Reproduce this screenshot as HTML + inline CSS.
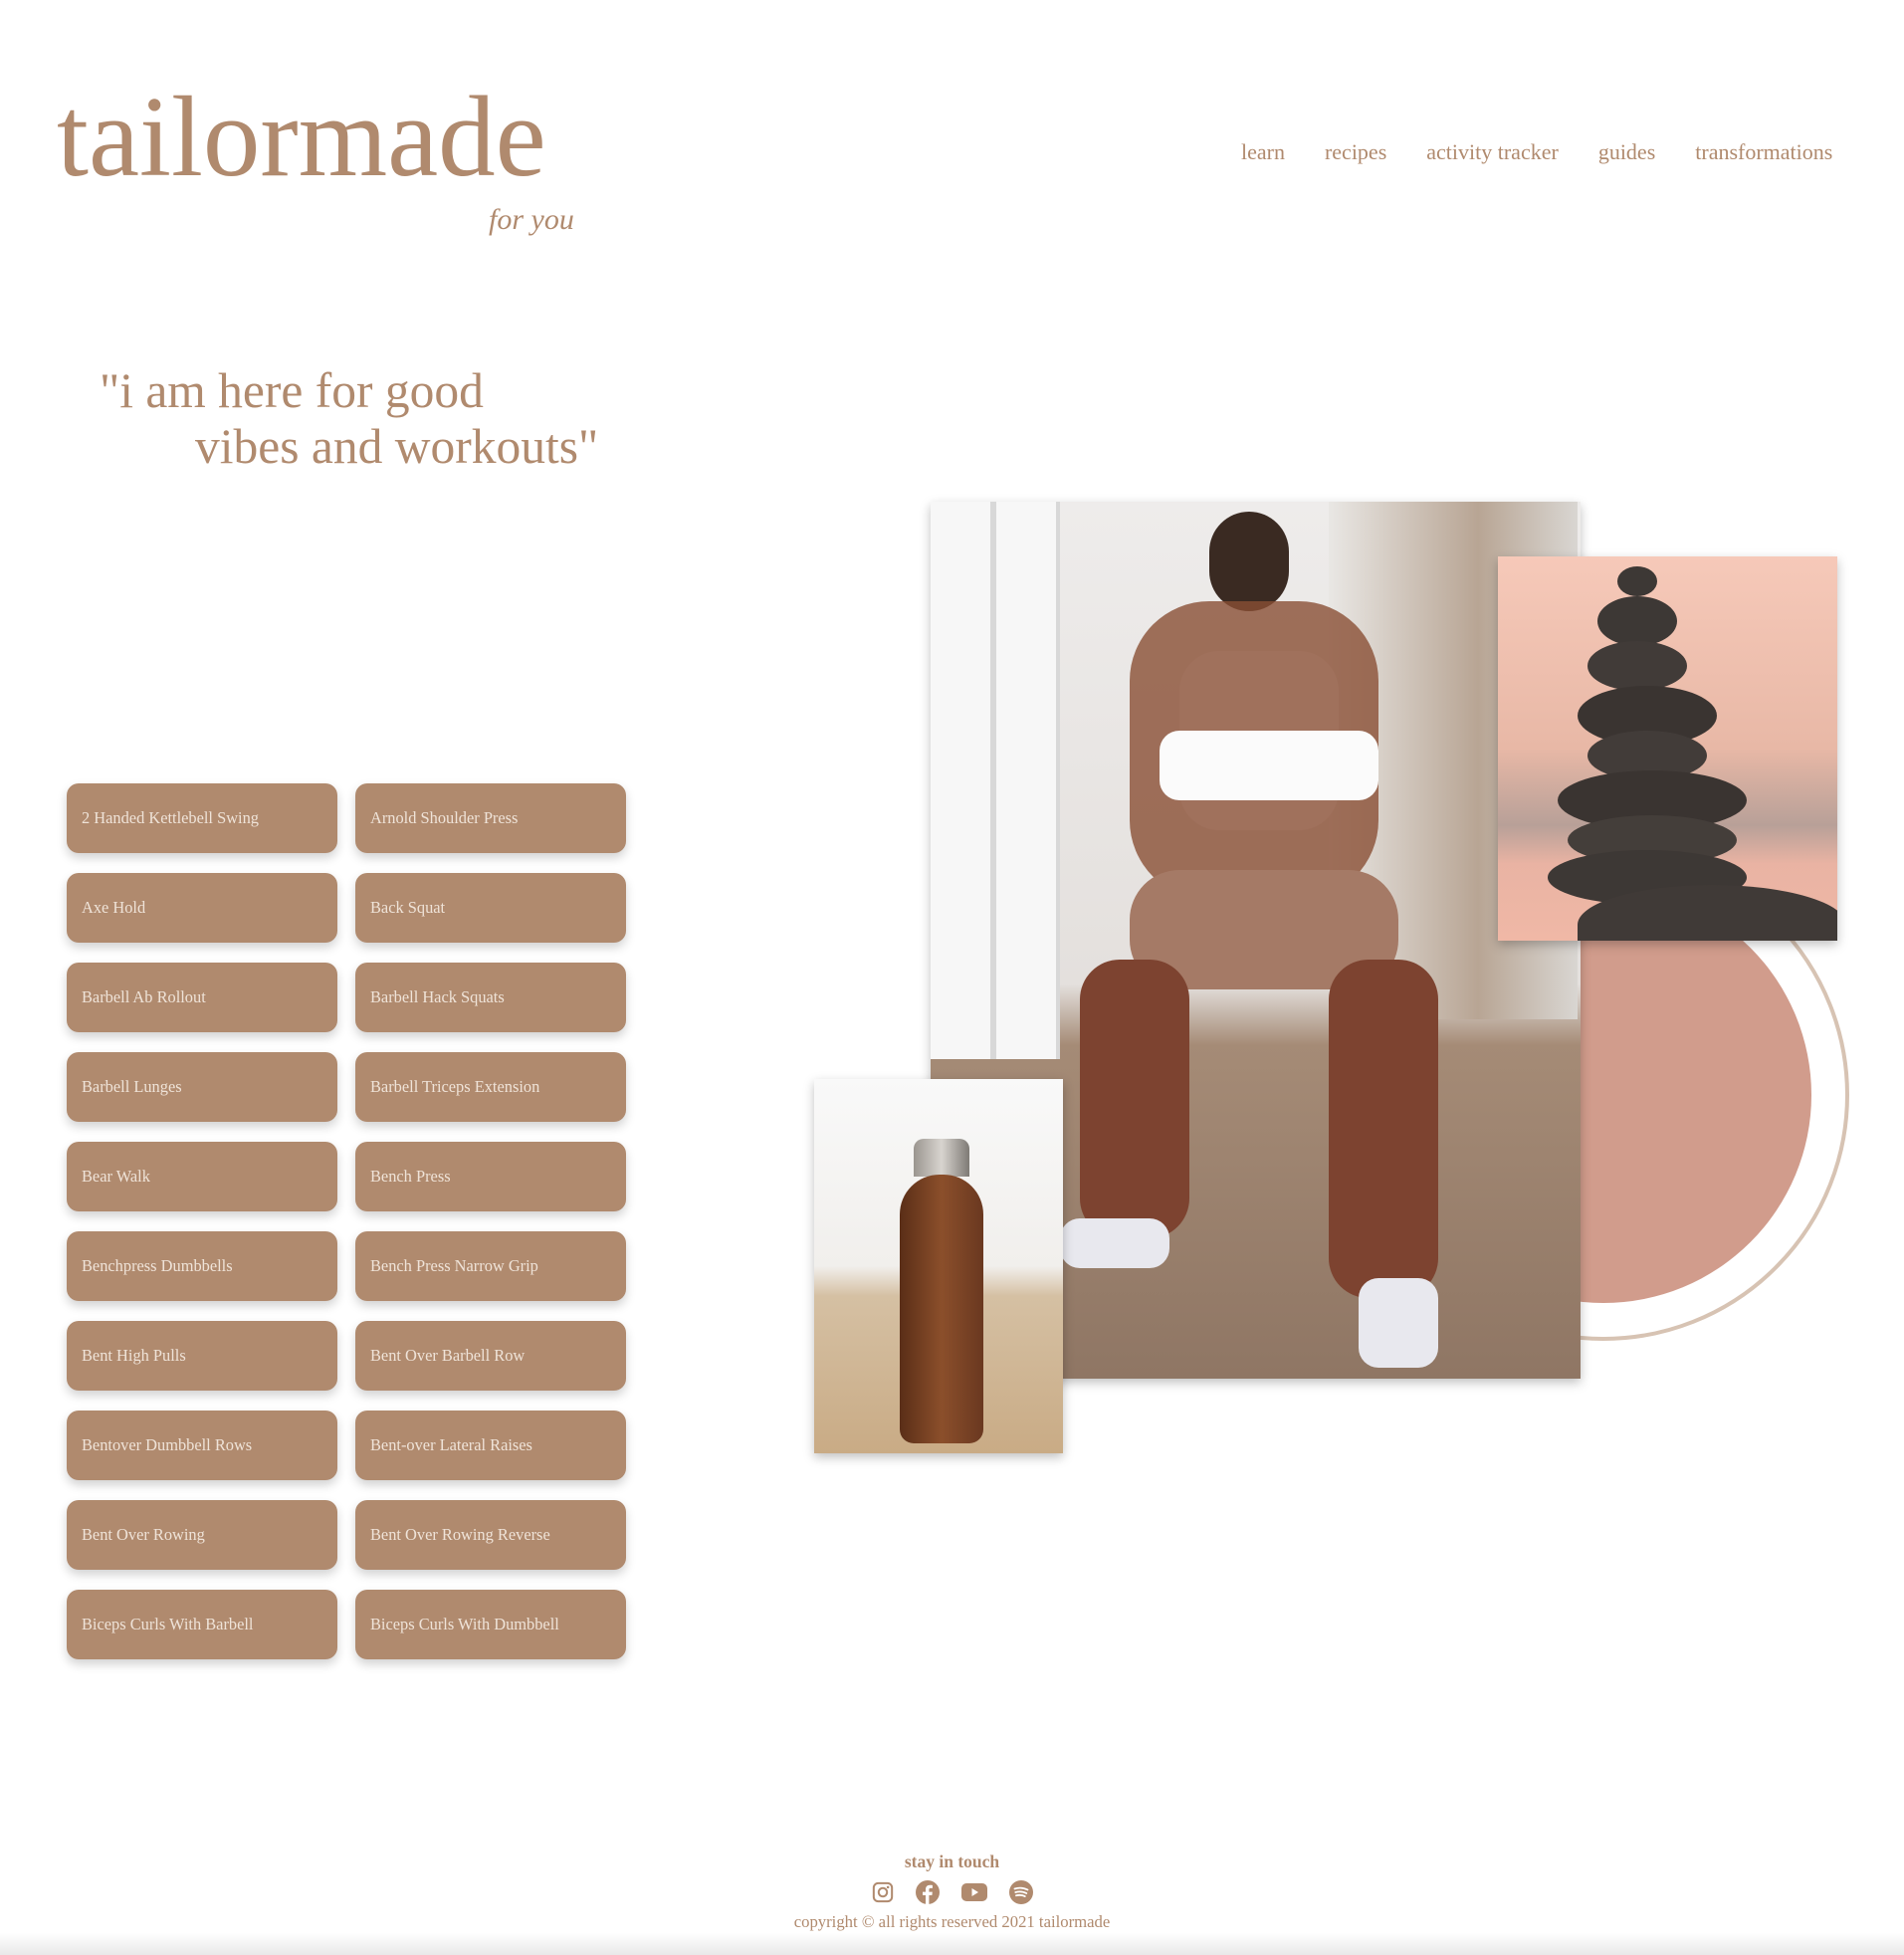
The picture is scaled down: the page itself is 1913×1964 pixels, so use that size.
<!DOCTYPE html>
<html><head><meta charset="utf-8">
<style>
*{margin:0;padding:0;box-sizing:border-box}
html,body{width:1913px;height:1964px;background:#fff;overflow:hidden;font-family:"Liberation Serif",serif;color:#b08a6e;position:relative}
.logo{position:absolute;left:57px;top:80px;font-size:115px;letter-spacing:0;line-height:1;color:#b08a6e}
.for{position:absolute;left:491px;top:204px;font-size:30px;font-style:italic}
.nav{position:absolute;top:140px;left:1247px;font-size:22px;display:flex;gap:40px}
.quote{position:absolute;font-size:49.5px;line-height:1}
.btn{position:absolute;width:272px;height:70px;background:#b08a6e;border-radius:12px;color:#efe3d8;font-size:16.4px;padding-left:15px;line-height:70px;box-shadow:0 5px 10px rgba(0,0,0,.18)}
.ph{position:absolute;box-shadow:0 4px 10px rgba(0,0,0,.25);overflow:hidden}
.foot{position:absolute;left:0;width:1913px;text-align:center}
</style></head><body>
<div class="logo">tailormade</div>
<div class="for">for you</div>
<div class="nav"><span>learn</span><span>recipes</span><span>activity tracker</span><span>guides</span><span>transformations</span></div>
<div class="quote" style="left:100px;top:368px">"i am here for good</div>
<div class="quote" style="left:196px;top:424px">vibes and workouts"</div>

<div class="btn" style="left:67px;top:787px">2 Handed Kettlebell Swing</div>
<div class="btn" style="left:357px;top:787px">Arnold Shoulder Press</div>
<div class="btn" style="left:67px;top:877px">Axe Hold</div>
<div class="btn" style="left:357px;top:877px">Back Squat</div>
<div class="btn" style="left:67px;top:967px">Barbell Ab Rollout</div>
<div class="btn" style="left:357px;top:967px">Barbell Hack Squats</div>
<div class="btn" style="left:67px;top:1057px">Barbell Lunges</div>
<div class="btn" style="left:357px;top:1057px">Barbell Triceps Extension</div>
<div class="btn" style="left:67px;top:1147px">Bear Walk</div>
<div class="btn" style="left:357px;top:1147px">Bench Press</div>
<div class="btn" style="left:67px;top:1237px">Benchpress Dumbbells</div>
<div class="btn" style="left:357px;top:1237px">Bench Press Narrow Grip</div>
<div class="btn" style="left:67px;top:1327px">Bent High Pulls</div>
<div class="btn" style="left:357px;top:1327px">Bent Over Barbell Row</div>
<div class="btn" style="left:67px;top:1417px">Bentover Dumbbell Rows</div>
<div class="btn" style="left:357px;top:1417px">Bent-over Lateral Raises</div>
<div class="btn" style="left:67px;top:1507px">Bent Over Rowing</div>
<div class="btn" style="left:357px;top:1507px">Bent Over Rowing Reverse</div>
<div class="btn" style="left:67px;top:1597px">Biceps Curls With Barbell</div>
<div class="btn" style="left:357px;top:1597px">Biceps Curls With Dumbbell</div>

<div style="position:absolute;left:1364px;top:853px;width:494px;height:494px;border-radius:50%;border:4px solid #d7c3b3"></div>
<div style="position:absolute;left:1402px;top:891px;width:418px;height:418px;border-radius:50%;background:#d19c8c"></div>

<div class="ph" style="left:935px;top:504px;width:653px;height:881px;background:linear-gradient(180deg,#eeeceb 0%,#e4e0dd 55%,#a58b76 62%,#8f7664 100%)">
 <div style="position:absolute;left:0;top:0;width:130px;height:560px;background:repeating-linear-gradient(90deg,#f7f7f7 0 60px,#d8d8d8 60px 66px)"></div>
 <div style="position:absolute;left:400px;top:0;width:250px;height:520px;background:linear-gradient(90deg,#e9e7e4,#b8a594 60%,#d9d6d2)"></div>
 <div style="position:absolute;left:280px;top:10px;width:80px;height:100px;border-radius:40px;background:#3a2a22"></div>
 <div style="position:absolute;left:250px;top:150px;width:160px;height:180px;border-radius:40px;background:#fafafa"></div>
 <div style="position:absolute;left:200px;top:100px;width:250px;height:300px;border-radius:80px;background:#8a4f35;opacity:.8"></div>
 <div style="position:absolute;left:230px;top:230px;width:220px;height:70px;border-radius:20px;background:#fbfbfb"></div>
 <div style="position:absolute;left:200px;top:370px;width:270px;height:120px;border-radius:50px;background:#a57a66"></div>
 <div style="position:absolute;left:150px;top:460px;width:110px;height:280px;border-radius:40px;background:#7d4330"></div>
 <div style="position:absolute;left:400px;top:460px;width:110px;height:340px;border-radius:40px;background:#7d4330"></div>
 <div style="position:absolute;left:130px;top:720px;width:110px;height:50px;border-radius:20px;background:#e8e8ee"></div>
 <div style="position:absolute;left:430px;top:780px;width:80px;height:90px;border-radius:20px;background:#e8e8ee"></div>
</div>

<div class="ph" style="left:1505px;top:559px;width:341px;height:386px;background:linear-gradient(180deg,#f6c9b9 0%,#e8b8a6 50%,#b8a098 70%,#e9b3a3 80%,#f0b8a6 100%)">
 <div style="position:absolute;left:120px;top:10px;width:40px;height:30px;border-radius:50%;background:#3d3835"></div>
 <div style="position:absolute;left:100px;top:40px;width:80px;height:50px;border-radius:50%;background:#3d3835"></div>
 <div style="position:absolute;left:90px;top:85px;width:100px;height:50px;border-radius:50%;background:#413b38"></div>
 <div style="position:absolute;left:80px;top:130px;width:140px;height:60px;border-radius:50%;background:#3a3431"></div>
 <div style="position:absolute;left:90px;top:175px;width:120px;height:50px;border-radius:50%;background:#423c39"></div>
 <div style="position:absolute;left:60px;top:215px;width:190px;height:60px;border-radius:50%;background:#3a3431"></div>
 <div style="position:absolute;left:70px;top:260px;width:170px;height:50px;border-radius:50%;background:#443e3a"></div>
 <div style="position:absolute;left:50px;top:295px;width:200px;height:55px;border-radius:50%;background:#3d3835"></div>
 <div style="position:absolute;left:80px;top:330px;width:270px;height:80px;border-radius:50% 50% 0 0;background:#403a37"></div>
</div>

<div class="ph" style="left:818px;top:1084px;width:250px;height:376px;background:linear-gradient(180deg,#f9f9f9 0%,#f1efec 50%,#d5c0a3 58%,#c9ab85 100%)">
 <div style="position:absolute;left:100px;top:60px;width:56px;height:38px;border-radius:10px 10px 0 0;background:linear-gradient(90deg,#9a958f,#d8d4cf,#7e7a75)"></div>
 <div style="position:absolute;left:86px;top:96px;width:84px;height:270px;border-radius:40px 40px 14px 14px;background:linear-gradient(90deg,#5a2e17,#8b4f2b,#6a3820)"></div>
</div>

<div class="foot" style="top:1860px;font-size:17.5px;font-weight:bold">stay in touch</div>
<div style="position:absolute;top:1889px;left:876px;display:flex;gap:22px;align-items:center">
 <svg width="22" height="22" viewBox="0 0 24 24"><rect x="2" y="2" width="20" height="20" rx="5" fill="none" stroke="#b08a6e" stroke-width="2.2"/><circle cx="12" cy="12" r="4.6" fill="none" stroke="#b08a6e" stroke-width="2.2"/><circle cx="17.6" cy="6.4" r="1.4" fill="#b08a6e"/></svg>
 <svg width="24" height="24" viewBox="0 0 24 24"><circle cx="12" cy="12" r="12" fill="#b08a6e"/><path d="M13.4 24V15h3l.4-3.4h-3.4V9.5c0-1 .3-1.6 1.7-1.6h1.8V4.9c-.3 0-1.4-.1-2.6-.1-2.6 0-4.3 1.6-4.3 4.4v2.4H7V15h3v9z" fill="#fff"/></svg>
 <svg width="26" height="20" viewBox="0 0 26 20"><rect x="0" y="1" width="26" height="18" rx="5" fill="#b08a6e"/><path d="M10.5 6l6.5 4-6.5 4z" fill="#fff"/></svg>
 <svg width="24" height="24" viewBox="0 0 24 24"><circle cx="12" cy="12" r="12" fill="#b08a6e"/><path d="M5.5 8.5c4.5-1.4 9-1 13 1M6.3 12c3.8-1.1 7.6-.8 11 1M7 15.3c3-.8 6.2-.6 8.8.8" stroke="#fff" stroke-width="1.8" fill="none" stroke-linecap="round"/></svg>
</div>
<div class="foot" style="top:1921px;font-size:16.7px">copyright © all rights reserved 2021 tailormade</div>
<div style="position:absolute;left:0;top:1942px;width:1913px;height:22px;background:linear-gradient(180deg,#fff,#e9e9e9)"></div>
</body></html>
